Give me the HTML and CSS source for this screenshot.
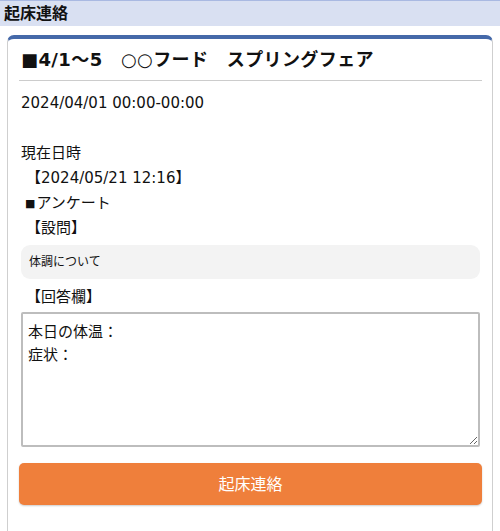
FILE: index.html
```html
<!DOCTYPE html>
<html lang="ja">
<head>
    <meta charset="UTF-8" />
    <meta name="viewport" content="width=device-width, initial-scale=1.0" />
    <title>起床連絡</title>
    <link rel="stylesheet" href="styles.css">
</head>
<body>

    <header class="page-header">起床連絡</header>

    <section class="card">
        <h2 class="card-title">■4/1～5　○○フード　スプリングフェア</h2>

        <div class="card-body">
            <p class="line">2024/04/01 00:00-00:00</p>
            <p class="line">&nbsp;</p>
            <p class="line">現在日時</p>
            <p class="line bracket">【2024/05/21 12:16】</p>
            <p class="line"><span class="mark">■</span>アンケート</p>
            <p class="line bracket">【設問】</p>
            <div class="question">体調について</div>
            <p class="line bracket answer-label">【回答欄】</p>
            <textarea class="answer" id="answer">本日の体温：
症状：</textarea>
        </div>

        <button class="submit-btn" type="button">起床連絡</button>
    </section>

</body>
</html>
```

FILE: styles.css
```css
body {
    font-family: 'DejaVu Sans', 'Noto Sans CJK JP', sans-serif;
    margin: 0;
    padding: 0;
    background: #fff;
    color: #111;
}

.page-header {
    background: #d9e0f2;
    border-top: 1px solid #a9b9e2;
    height: 25px;
    line-height: 25px;
    padding-left: 4px;
    font-size: 16px;
    font-weight: bold;
    color: #111;
}

.card {
    margin: 9px 7px 0;
    padding: 0 10px 20px 11px;
    border: 1px solid #cfcfcf;
    border-top: 4px solid #4569a9;
    border-radius: 7px 7px 0 0;
    min-height: 500px;
}

.card-title {
    margin: 0;
    padding: 9px 2px 8px;
    font-size: 18px;
    line-height: 24px;
    font-weight: bold;
    letter-spacing: 0.4px;
    border-bottom: 1px solid #cccccc;
}

.card-body {
    padding: 10px 2px 0;
}

.line {
    margin: 0;
    font-size: 15px;
    line-height: 25px;
}

.bracket {
    padding-left: 5px;
}

.mark {
    display: inline-block;
    font-size: 11px;
    margin: 0 1px 0 4px;
    vertical-align: 1px;
}

.question {
    margin-top: 4px;
    background: #f3f3f3;
    border-radius: 9px;
    padding: 0 8px;
    height: 34px;
    line-height: 34px;
    font-size: 12px;
}

.answer-label {
    margin-top: 6px;
}

.answer {
    display: block;
    box-sizing: border-box;
    width: 100%;
    height: 135px;
    margin-top: 2px;
    padding: 7px 5px;
    border: 2px solid #bdbdbd;
    border-radius: 2px;
    font-family: 'DejaVu Sans', 'Noto Sans CJK JP', sans-serif;
    font-size: 15px;
    line-height: 23px;
    color: #111;
    resize: vertical;
}

.submit-btn {
    display: block;
    width: 100%;
    height: 42px;
    margin-top: 16px;
    padding: 0 0 2px;
    background: #ef7f3b;
    border: none;
    border-radius: 5px;
    box-shadow: 0 1px 2px rgba(0, 0, 0, 0.2);
    color: #fff;
    font-family: 'DejaVu Sans', 'Noto Sans CJK JP', sans-serif;
    font-size: 16px;
    cursor: pointer;
}
```
